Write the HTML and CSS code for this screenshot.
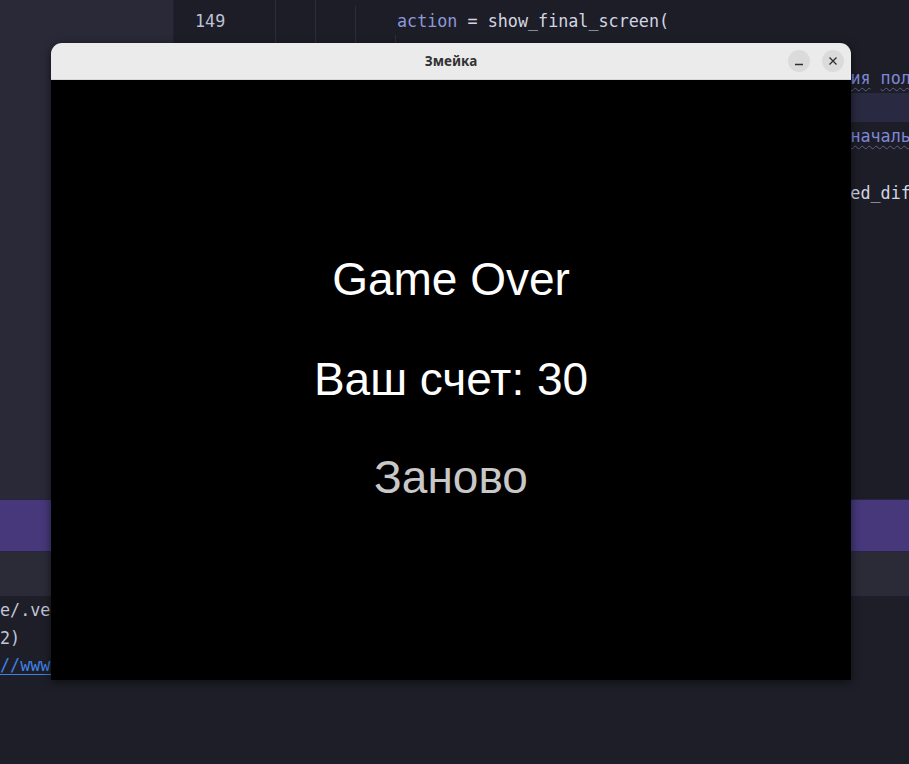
FILE: index.html
```html
<!DOCTYPE html>
<html lang="ru">
<head>
<meta charset="utf-8">
<title>Змейка</title>
<link rel="stylesheet" href="styles.css">
</head>
<body>
<div class="ide">
  <div class="main">
    <aside class="sidebar"></aside>
    <div class="editor">
      <div class="row"><span class="ln">149</span><span class="code"><span class="var">action</span> = show_final_screen(</span></div>
      <div class="row"><span class="ln">150</span><span class="code">    screen, score</span></div>
      <div class="row"><span class="ln">151</span><span class="code cm"># Сброс состояния змейки и яблок для обновлен<span class="typo">ия</span> <span class="typo">поля</span></span></div>
      <div class="row current"><span class="ln">152</span><span class="code">if action == "restart":</span></div>
      <div class="row"><span class="ln">153</span><span class="code cm"># Если игрок выбрал заново возвращаем игру в <span class="typo">начальное</span> состояние</span></div>
      <div class="row"><span class="ln">154</span><span class="code">    snake.reset()</span></div>
      <div class="row"><span class="ln">155</span><span class="code">game_speed = settings.DIFFICULTY_SPEED[selected_difficulty]</span></div>
      <div class="row"><span class="ln">156</span><span class="code">    score = 0</span></div>
      <div class="row"><span class="ln">157</span><span class="code">else:</span></div>
      <div class="row"><span class="ln">158</span><span class="code">    running = False</span></div>
    </div>
  </div>
  <div class="panel-bar"></div>
  <div class="tabs-bar"></div>
  <div class="terminal">
    <div class="tline">e/.venv/bin/python /home/user/PycharmProjects/snake/main.py</div>
    <div class="tline">2)</div>
    <div class="tline"><span class="link">//www.pygame.org/contribute.html</span></div>
  </div>
</div>

<div class="window">
  <div class="titlebar">
    <span class="title">Змейка</span>
    <div class="controls">
      <span class="wbtn">
        <svg width="10" height="10" viewBox="0 0 10 10"><path d="M1 8.5H9" stroke="#2e2e2e" stroke-width="1.3"/></svg>
      </span>
      <span class="wbtn">
        <svg width="10" height="10" viewBox="0 0 10 10"><path d="M1.5 1.5L8.5 8.5M8.5 1.5L1.5 8.5" stroke="#2e2e2e" stroke-width="1.3"/></svg>
      </span>
    </div>
  </div>
  <div class="screen">
    <div class="gtext">Game Over</div>
    <div class="gtext score">Ваш счет: 30</div>
    <div class="gtext again">Заново</div>
  </div>
</div>
</body>
</html>
```

FILE: styles.css
```css
* { box-sizing: border-box; }

html, body {
  margin: 0;
  padding: 0;
  width: 909px;
  height: 764px;
  overflow: hidden;
  background: #1e1e28;
}

.ide {
  display: flex;
  flex-direction: column;
  height: 764px;
}

.main {
  display: flex;
  height: 499px;
  flex: none;
}

.sidebar {
  width: 174px;
  flex: none;
  background: #292938;
  border-right: 1px solid #24202f;
}

.editor {
  flex: 1;
  overflow: hidden;
  background-color: #1d1d27;
  background-image:
    linear-gradient(#2d2d3a, #2d2d3a),
    linear-gradient(#2d2d3a, #2d2d3a),
    linear-gradient(#2d2d3a, #2d2d3a),
    linear-gradient(#2d2d3a, #2d2d3a);
  background-repeat: no-repeat;
  background-size: 1px 100%, 1px 100%, 1px 100%, 1px 100%;
  background-position: 101px 0, 141px 0, 181px 6px, 221px 35px;
  padding-top: 7px;
  font-family: "DejaVu Sans Mono", "Liberation Mono", monospace;
  font-size: 16.74px;
  line-height: 28.7px;
  color: #d3d5e2;
}

.row {
  display: flex;
  height: 28.7px;
}

.row.current {
  background: #292942;
}

.ln {
  width: 223px;
  padding-left: 21px;
  color: #bcc1d6;
  flex: none;
}

.code {
  flex: none;
  white-space: pre;
}

.var { color: #8b98dc; }

.cm { color: #7d88d8; }

.typo {
  text-decoration: underline wavy #59608a;
  text-decoration-thickness: 1px;
  text-underline-offset: 3px;
}

.panel-bar {
  flex: none;
  height: 53px;
  background: #46387a;
  border-top: 1px solid #2a2342;
  border-bottom: 1px solid #2b2346;
}

.tabs-bar {
  flex: none;
  height: 44px;
  background: #2b2b38;
  border-bottom: 1px solid #2e2840;
}

.terminal {
  flex: 1;
  background: #1e1e28;
  padding-top: 1px;
  font-family: "DejaVu Sans Mono", "Liberation Mono", monospace;
  font-size: 16.74px;
  line-height: 27.5px;
  color: #c3c6d6;
}

.tline { white-space: pre; }

.link {
  color: #3f82e4;
  text-decoration: underline;
  text-underline-offset: 3px;
}

/* Application window floating over the IDE */
.window {
  position: absolute;
  left: 51px;
  top: 43px;
  width: 800px;
  border-radius: 11px 11px 0 0;
  overflow: hidden;
  box-shadow: 0 2px 10px rgba(0, 0, 0, 0.55);
}

.titlebar {
  height: 37px;
  background: #ebebeb;
  border-bottom: 1px solid #d6d6d6;
  display: flex;
  align-items: center;
  justify-content: center;
  position: relative;
}

.title {
  font-family: "Noto Sans", "DejaVu Sans", sans-serif;
  font-weight: 700;
  font-size: 13.5px;
  color: #333333;
}

.controls {
  position: absolute;
  right: 7px;
  top: 7px;
  display: flex;
  gap: 12px;
}

.wbtn {
  width: 22px;
  height: 22px;
  border-radius: 50%;
  background: #dbdbdb;
  display: flex;
  align-items: center;
  justify-content: center;
}

.screen {
  height: 600px;
  background: #000;
  display: flex;
  flex-direction: column;
  align-items: center;
  padding-top: 176px;
  font-family: "Liberation Sans", Arial, sans-serif;
  font-size: 46px;
  line-height: 46px;
  color: #ffffff;
}

.score { margin-top: 54px; }

.again {
  margin-top: 52px;
  color: #c8c8c8;
}
```
